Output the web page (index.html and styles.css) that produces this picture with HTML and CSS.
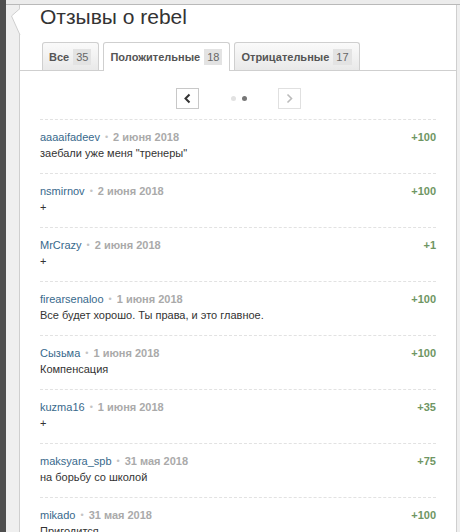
FILE: index.html
```html
<!DOCTYPE html>
<html lang="ru">
<head>
  <meta charset="UTF-8" />
  <title>Отзывы о rebel</title>
  <link rel="stylesheet" href="styles.css">
</head>
<body>
  <div class="frame">
    <div class="rail"></div>
    <div class="main">
      <div class="topbar"></div>
      <section class="panel">
        <svg class="notch" width="12" height="28" viewBox="0 0 12 28">
          <polygon points="10,0.5 1.5,8 10,27" fill="#fff" />
          <polyline points="10,0.5 1.5,8 10,27" fill="none" stroke="#cfcfcf" stroke-width="1" />
        </svg>
        <h1 class="title">Отзывы о rebel</h1>

        <ul class="tabs">
          <li class="tab">Все <span class="badge">35</span></li>
          <li class="tab active">Положительные <span class="badge">18</span></li>
          <li class="tab">Отрицательные <span class="badge">17</span></li>
        </ul>

        <div class="pager">
          <span class="pager-btn">
            <svg width="21" height="19" viewBox="0 0 21 19"><polyline points="12.5,5.5 8.5,9.5 12.5,13.5" fill="none" stroke="#333" stroke-width="2" /></svg>
          </span>
          <span class="dots"><i class="dot"></i><i class="dot current"></i></span>
          <span class="pager-btn disabled">
            <svg width="21" height="19" viewBox="0 0 21 19"><polyline points="8.5,5.5 12.5,9.5 8.5,13.5" fill="none" stroke="#bbb" stroke-width="1.6" /></svg>
          </span>
        </div>

        <ul class="reviews">
          <li class="review">
            <div class="review-head">
              <span><a class="author">aaaaifadeev</a><span class="sep">•</span><span class="date">2 июня 2018</span></span>
              <span class="score">+100</span>
            </div>
            <div class="review-text">заебали уже меня "тренеры"</div>
          </li>
          <li class="review">
            <div class="review-head">
              <span><a class="author">nsmirnov</a><span class="sep">•</span><span class="date">2 июня 2018</span></span>
              <span class="score">+100</span>
            </div>
            <div class="review-text">+</div>
          </li>
          <li class="review">
            <div class="review-head">
              <span><a class="author">MrCrazy</a><span class="sep">•</span><span class="date">2 июня 2018</span></span>
              <span class="score">+1</span>
            </div>
            <div class="review-text">+</div>
          </li>
          <li class="review">
            <div class="review-head">
              <span><a class="author">firearsenaloo</a><span class="sep">•</span><span class="date">1 июня 2018</span></span>
              <span class="score">+100</span>
            </div>
            <div class="review-text">Все будет хорошо. Ты права, и это главное.</div>
          </li>
          <li class="review">
            <div class="review-head">
              <span><a class="author">Сызьма</a><span class="sep">•</span><span class="date">1 июня 2018</span></span>
              <span class="score">+100</span>
            </div>
            <div class="review-text">Компенсация</div>
          </li>
          <li class="review">
            <div class="review-head">
              <span><a class="author">kuzma16</a><span class="sep">•</span><span class="date">1 июня 2018</span></span>
              <span class="score">+35</span>
            </div>
            <div class="review-text">+</div>
          </li>
          <li class="review">
            <div class="review-head">
              <span><a class="author">maksyara_spb</a><span class="sep">•</span><span class="date">31 мая 2018</span></span>
              <span class="score">+75</span>
            </div>
            <div class="review-text">на борьбу со школой</div>
          </li>
          <li class="review">
            <div class="review-head">
              <span><a class="author">mikado</a><span class="sep">•</span><span class="date">31 мая 2018</span></span>
              <span class="score">+100</span>
            </div>
            <div class="review-text">Пригодится.</div>
          </li>
        </ul>
      </section>
    </div>
  </div>
</body>
</html>
```

FILE: styles.css
```css
body {
  margin: 0;
  font-family: 'Liberation Sans', Arial, sans-serif;
  background: #efefef;
  color: #333;
  overflow: hidden;
}

.frame {
  display: flex;
  min-height: 100vh;
}

.rail {
  width: 6px;
  flex: none;
  background: #4f4f4f;
}

.main {
  flex: 1;
  display: flex;
  flex-direction: column;
}

.topbar {
  height: 4px;
  border-bottom: 1px solid #b9b9b9;
  background: #ececec;
}

.panel {
  position: relative;
  flex: 1;
  margin: 0 3px 0 13px;
  background: #fff;
  border-left: 1px solid #cfcfcf;
  border-right: 1px solid #cfcfcf;
}

.notch {
  position: absolute;
  left: -10px;
  top: 3px;
}

.title {
  margin: 0;
  padding: 0 0 0 20px;
  font-size: 21px;
  line-height: 24px;
  font-weight: normal;
  color: #333;
}

/* tabs */
.tabs {
  list-style: none;
  margin: 13px 0 0;
  padding: 0 0 0 22px;
  display: flex;
  gap: 4px;
  align-items: flex-end;
  border-bottom: 1px solid #cfcfcf;
}

.tab {
  box-sizing: border-box;
  height: 28px;
  padding: 0 7px 0 6px;
  display: flex;
  align-items: center;
  border: 1px solid #cfcfcf;
  border-bottom: none;
  border-radius: 3px 3px 0 0;
  background: linear-gradient(#fafafa, #e9e9e9);
  font-size: 11px;
  font-weight: bold;
  color: #555;
}

.tab.active {
  height: 29px;
  margin-bottom: -1px;
  background: #fff;
}

.badge {
  margin-left: 4px;
  padding: 0 3px;
  height: 16px;
  line-height: 16px;
  background: #e3e3e3;
  font-weight: normal;
  color: #666;
}

/* pager */
.pager {
  display: flex;
  justify-content: center;
  align-items: center;
  padding: 17px 0 10px;
}

.pager-btn {
  display: flex;
  width: 21px;
  height: 19px;
  border: 1px solid #c8c8c8;
  background: #fff;
}

.pager-btn.disabled {
  border-color: #e0e0e0;
}

.dots {
  display: flex;
  gap: 6px;
  margin: 0 31px 0 32px;
}

.dot {
  width: 5px;
  height: 5px;
  border-radius: 50%;
  background: #e2e2e2;
}

.dot.current {
  background: #777;
}

/* reviews */
.reviews {
  list-style: none;
  margin: 0 20px;
  padding: 0;
}

.review {
  border-top: 1px dashed #e2e2e2;
  padding: 9px 0 12px;
  font-size: 11px;
  line-height: 16px;
}

.review-head {
  display: flex;
  justify-content: space-between;
  height: 16px;
}

.author {
  color: #38698c;
}

.sep {
  margin: 0 5px;
  color: #c4c4c4;
  font-size: 9px;
  line-height: 16px;
  vertical-align: top;
}

.date {
  font-weight: bold;
  color: #aaa;
}

.score {
  font-weight: bold;
  color: #6f9663;
}

.review-text {
  color: #333;
}
```
